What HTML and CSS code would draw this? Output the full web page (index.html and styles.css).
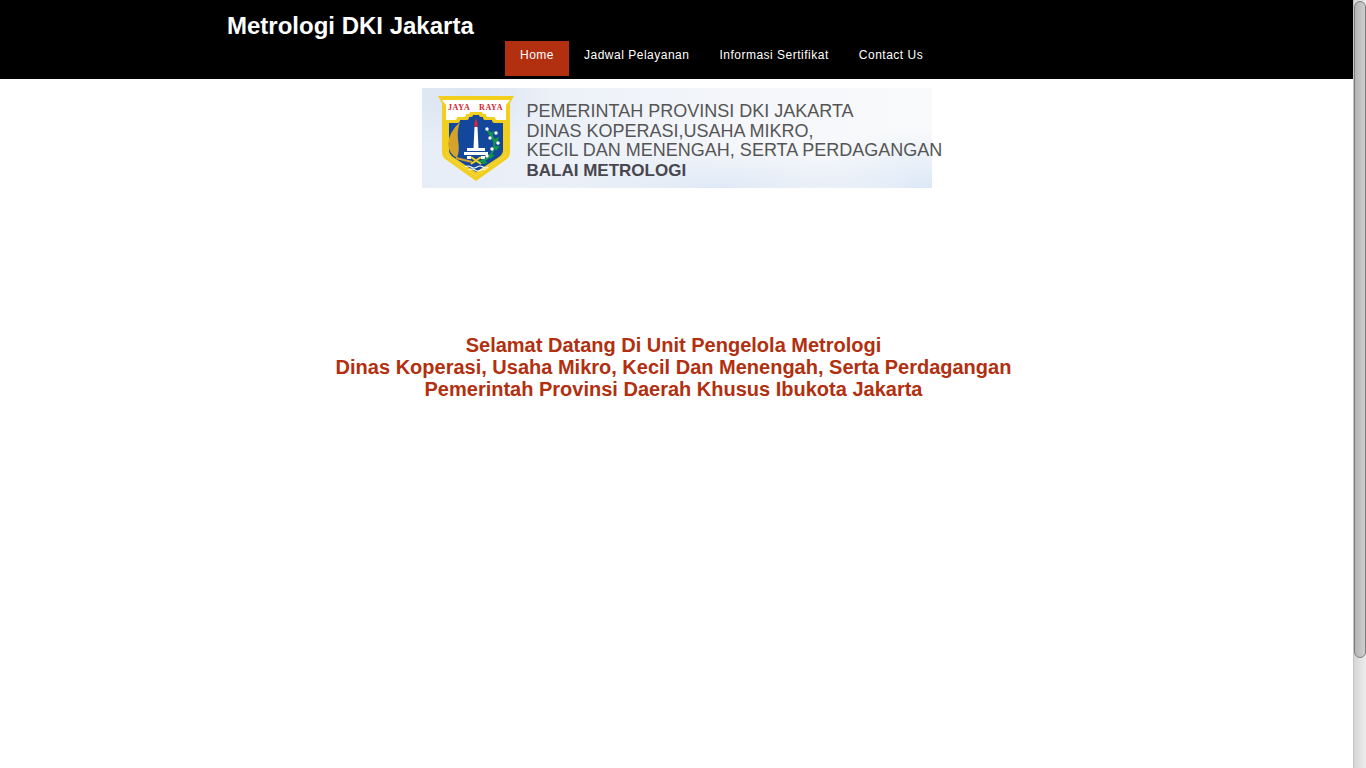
FILE: index.html
```html
<!DOCTYPE html>
<html lang="en">
<head>
    <meta charset="UTF-8">
    <meta name="viewport" content="width=device-width, initial-scale=1.0">
    <title>Metrologi DKI Jakarta</title>
    <link rel="stylesheet" href="styles.css">
</head>
<body>
    <div class="page">
        <div class="main">
            <div class="header">
                <div class="site-title">Metrologi DKI Jakarta</div>
                <ul class="nav">
                    <li class="active">Home</li>
                    <li>Jadwal Pelayanan</li>
                    <li>Informasi Sertifikat</li>
                    <li>Contact Us</li>
                </ul>
            </div>
            <div class="banner">
                <svg class="crest" width="76" height="85" viewBox="0 0 76 85">
                    <path d="M0 0H76L72 7V56Q72 62 66 65L38 85L10 65Q4 62 4 56V7Z" fill="#f2cf1f"/>
                    <path d="M4 4H72L68 9V55Q68 60 63 63L38 80L13 63Q8 60 8 55V9Z" fill="#fff"/>
                    <path d="M8 24H17Q19 24 19 21H26Q28 21 28 18H30Q32 18 32 16H44Q44 18 46 18H48Q48 21 50 21H57Q57 24 59 24H68V55Q68 60 63 63L38 80L13 63Q8 60 8 55Z" fill="#f2cf1f"/>
                    <path d="M11 27H19Q22 27 22 24H29Q31 24 31 21H33Q35 21 35 19H41Q41 21 43 21H45Q45 24 47 24H54Q54 27 57 27H65V54Q65 58 61 61L38 76L15 61Q11 58 11 54Z" fill="#12479c"/>
                    <rect x="8" y="5" width="60" height="11" fill="#fff"/>
                    <text class="crest-text" x="10" y="14">JAYA</text>
                    <text class="crest-text" x="41" y="14">RAYA</text>
                    <path d="M36.5 27L38 22L39.5 27Z" fill="#e8262a"/>
                    <rect x="36.5" y="27" width="3" height="4" fill="#e8262a"/>
                    <path d="M36.5 31H39.5L40.5 52H35.5Z" fill="#fff"/>
                    <rect x="29" y="52" width="18" height="3" fill="#fff"/>
                    <rect x="26" y="56" width="24" height="3" fill="#fff"/>
                    <rect x="29" y="60" width="4" height="3" fill="#fff"/>
                    <rect x="43" y="60" width="4" height="3" fill="#fff"/>
                    <path d="M22 26Q11 36 10 48Q11 58 19 62Q22 54 20 44Q19 34 22 26Z" fill="#d3a32c"/>
                    <path d="M18 62L34 66" stroke="#d3a32c" stroke-width="2" fill="none"/>
                    <path d="M49 34Q62 46 52 60Q46 66 38 66" stroke="#14964a" stroke-width="2" fill="none"/>
                    <path d="M50 38L56 35L54 41ZM54 44L61 41L59 48ZM55 50L62 50L58 55ZM50 58L57 59L52 63ZM44 63L50 67L44 68Z" fill="#14964a"/>
                    <circle cx="49" cy="33" r="1.7" fill="#fff"/>
                    <circle cx="58" cy="37" r="1.7" fill="#fff"/>
                    <circle cx="52" cy="42" r="1.7" fill="#fff"/>
                    <circle cx="60" cy="47" r="1.7" fill="#fff"/>
                    <circle cx="54" cy="53" r="1.7" fill="#fff"/>
                    <circle cx="49" cy="60" r="1.7" fill="#fff"/>
                    <path d="M33 61L43 68M43 61L33 68" stroke="#f2cf1f" stroke-width="2"/>
                    <path d="M27 71Q30 69 33 71T39 71T45 71T50 71M31 74Q34 72 37 74T43 74T47 74" stroke="#fff" stroke-width="1.2" fill="none"/>
                </svg>
                <div class="banner-text">
                    <div>PEMERINTAH PROVINSI DKI JAKARTA</div>
                    <div>DINAS KOPERASI,USAHA MIKRO,</div>
                    <div>KECIL DAN MENENGAH, SERTA PERDAGANGAN</div>
                    <div class="banner-strong">BALAI METROLOGI</div>
                </div>
            </div>
            <h1 class="welcome">
                Selamat Datang Di Unit Pengelola Metrologi<br>
                Dinas Koperasi, Usaha Mikro, Kecil Dan Menengah, Serta Perdagangan<br>
                Pemerintah Provinsi Daerah Khusus Ibukota Jakarta
            </h1>
        </div>
        <div class="scrollbar">
            <div class="scroll-thumb"></div>
        </div>
    </div>
</body>
</html>
```

FILE: styles.css
```css
body, html {
    margin: 0;
    padding: 0;
    height: 100%;
    overflow: hidden;
    font-family: "Liberation Sans", Arial, sans-serif;
    background-color: #fff;
}
.page {
    display: flex;
    height: 768px;
}
.main {
    flex: 1;
    min-width: 0;
}
.header {
    background-color: #000;
    height: 79px;
    padding-left: 227px;
    box-sizing: border-box;
    display: flex;
    flex-direction: column;
}
.site-title {
    color: #fff;
    font-size: 24px;
    font-weight: bold;
    line-height: 28px;
    padding-top: 12px;
    height: 29px;
}
.nav {
    list-style: none;
    display: flex;
    margin: 0;
    padding: 0 0 0 278px;
}
.nav li {
    color: #fff;
    font-size: 12px;
    letter-spacing: 0.5px;
    line-height: 14px;
    height: 35px;
    padding: 7px 15px 0;
    box-sizing: border-box;
}
.nav li.active {
    background-color: #b22f0f;
}
.banner {
    width: 510px;
    height: 100px;
    margin: 9px auto 0;
    display: flex;
    padding: 8px 0 0 16px;
    box-sizing: border-box;
    background-color: #f8f9fb;
    background-image:
        radial-gradient(ellipse 190px 40px at 58% 100%, #dfe9f6, transparent),
        radial-gradient(ellipse 130px 60px at 100% 100%, #dce8f7, transparent),
        radial-gradient(ellipse 90px 50px at 8% 8%, #dbe4f2, transparent),
        linear-gradient(90deg, #e6edf7, #f4f6fa 60%, #f9fafb);
}
.crest {
    flex: none;
}
.crest-text {
    font-family: "Liberation Serif", serif;
    font-size: 8px;
    font-weight: bold;
    letter-spacing: 0.6px;
    fill: #d3242e;
}
.banner-text {
    margin-left: 13px;
    padding-top: 6px;
    color: #555;
    font-size: 18px;
    line-height: 19.7px;
    white-space: nowrap;
}
.banner-strong {
    color: #48464e;
    font-weight: bold;
    font-size: 17px;
}
.welcome {
    margin: 146px 6px 0 0;
    text-align: center;
    color: #b22f0f;
    font-size: 20px;
    font-weight: bold;
    line-height: 22px;
}
.scrollbar {
    flex: none;
    width: 13px;
    background: linear-gradient(90deg, #d6d6d6, #ececec);
    border-left: 1px solid #c4c4c4;
    box-sizing: border-box;
}
.scroll-thumb {
    height: 657px;
    margin-top: 1px;
    background: linear-gradient(90deg, #b4b4b4, #cfcfcf);
    border: 1px solid #7d7d7d;
    border-radius: 6px;
    box-sizing: border-box;
}
```
